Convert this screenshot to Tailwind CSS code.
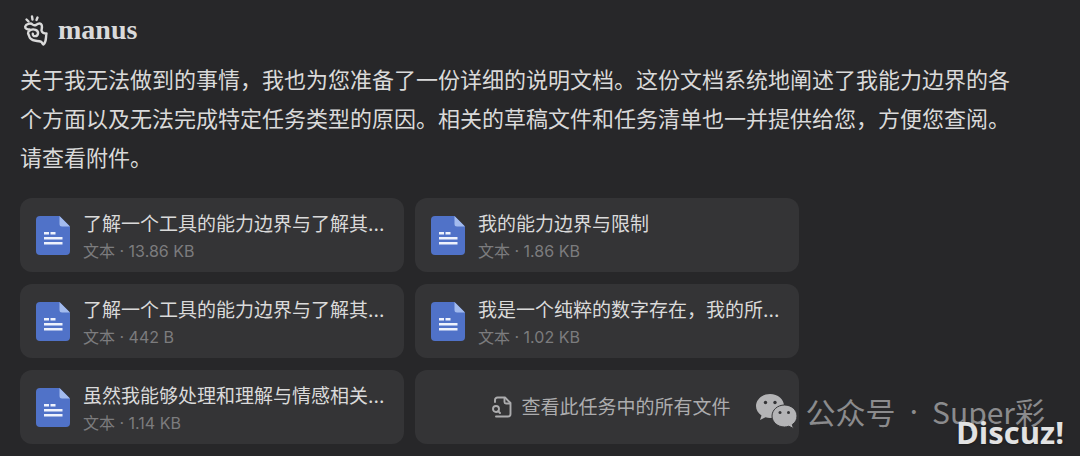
<!DOCTYPE html>
<html lang="zh-CN">
<head>
    <meta charset="UTF-8">
    <meta name="viewport" content="width=device-width, initial-scale=1.0">
    <title>manus</title>
    <script src="https://cdn.jsdelivr.net/npm/@tailwindcss/browser@4"></script>
</head>
<body class="relative min-h-screen bg-[#272729] text-[#dadada] font-['Inter','Noto_Sans_CJK_SC',sans-serif]">
    <!-- icons shared by the cards -->
    <svg class="hidden">
        <symbol id="doc" viewBox="0 0 34 39">
            <path fill="#5072c8" d="M4 0H23.500L34 10.500V35a4 4 0 0 1-4 4H4a4 4 0 0 1-4-4V4a4 4 0 0 1 4-4z"/>
            <path fill="#a3bbee" d="M23.500 0L34 10.500H26a2.500 2.500 0 0 1-2.500-2.500z"/>
            <path fill="#eef2fc" d="M8 16h5v2.500H8zM14.500 16h5v2.500h-5zM8 21h18.500v2.500H8zM8 26h18.500v2.500H8z"/>
        </symbol>
    </svg>

    <main class="pl-5 pr-14 pt-3">
        <header class="flex items-center gap-[10px] h-9">
            <svg class="w-7 h-9" viewBox="0 0 28 36" fill="none" stroke="#dadada" stroke-width="2.400" stroke-linecap="round" stroke-linejoin="round">
                <path d="M6.500 7.500L8.500 9.500M12 4.500L12.500 7.500M17.500 5.500L16.500 8"/>
                <path d="M9.500 17.500C7 17.500 5 16.500 5.200 14.500C6 12 10.500 10.500 12.500 12.500C13.500 13.500 14.500 13.500 16 13C18 11.500 19.500 11 21 12C23 14 21.500 17 21.500 18.500C22 20.500 24 21.500 26.500 21.500C25.500 25 27 29 23.500 32.500C22 32 22.500 30 20.500 29.500C17.500 28.500 13 29.500 10.500 26.500C9 25.500 9.500 24 8.500 22.500C7.500 21 8.500 18.500 10.500 18C13.500 16.500 18.500 18 18 21.500C17.500 25 12.500 25 12.800 21.800"/>
            </svg>
            <h1 class="text-[28px] leading-8 font-bold font-['Liberation_Serif',serif]">manus</h1>
        </header>

        <p class="mt-[13px] text-[22px] leading-[39px]">关于我无法做到的事情，我也为您准备了一份详细的说明文档。这份文档系统地阐述了我能力边界的各个方面以及无法完成特定任务类型的原因。相关的草稿文件和任务清单也一并提供给您，方便您查阅。请查看附件。</p>

        <section class="mt-5 grid grid-cols-2 gap-x-[11px] gap-y-3 max-w-[779px]">
            <a href="#" class="flex items-center gap-[13px] h-[74px] px-4 rounded-xl bg-[#343436]">
                <svg class="w-[34px] h-[39px] shrink-0"><use href="#doc"/></svg>
                <div class="min-w-0 pt-[3px] whitespace-nowrap">
                    <h2 class="text-[19px] leading-7">了解一个工具的能力边界与了解其...</h2>
                    <p class="text-base leading-6 text-[#7c7c7e]">文本 · 13.86 KB</p>
                </div>
            </a>
            <a href="#" class="flex items-center gap-[13px] h-[74px] px-4 rounded-xl bg-[#343436]">
                <svg class="w-[34px] h-[39px] shrink-0"><use href="#doc"/></svg>
                <div class="min-w-0 pt-[3px] whitespace-nowrap">
                    <h2 class="text-[19px] leading-7">我的能力边界与限制</h2>
                    <p class="text-base leading-6 text-[#7c7c7e]">文本 · 1.86 KB</p>
                </div>
            </a>
            <a href="#" class="flex items-center gap-[13px] h-[74px] px-4 rounded-xl bg-[#343436]">
                <svg class="w-[34px] h-[39px] shrink-0"><use href="#doc"/></svg>
                <div class="min-w-0 pt-[3px] whitespace-nowrap">
                    <h2 class="text-[19px] leading-7">了解一个工具的能力边界与了解其...</h2>
                    <p class="text-base leading-6 text-[#7c7c7e]">文本 · 442 B</p>
                </div>
            </a>
            <a href="#" class="flex items-center gap-[13px] h-[74px] px-4 rounded-xl bg-[#343436]">
                <svg class="w-[34px] h-[39px] shrink-0"><use href="#doc"/></svg>
                <div class="min-w-0 pt-[3px] whitespace-nowrap">
                    <h2 class="text-[19px] leading-7">我是一个纯粹的数字存在，我的所...</h2>
                    <p class="text-base leading-6 text-[#7c7c7e]">文本 · 1.02 KB</p>
                </div>
            </a>
            <a href="#" class="flex items-center gap-[13px] h-[74px] px-4 rounded-xl bg-[#343436]">
                <svg class="w-[34px] h-[39px] shrink-0"><use href="#doc"/></svg>
                <div class="min-w-0 pt-[3px] whitespace-nowrap">
                    <h2 class="text-[19px] leading-7">虽然我能够处理和理解与情感相关...</h2>
                    <p class="text-base leading-6 text-[#7c7c7e]">文本 · 1.14 KB</p>
                </div>
            </a>
            <button type="button" class="flex items-center justify-center gap-2 h-[74px] pl-6 pr-4 rounded-xl bg-[#343436] text-[19px] text-[#acacae]">
                <svg class="w-[22px] h-[22px]" viewBox="0 0 22 22" fill="none" stroke="currentColor" stroke-width="1.900" stroke-linecap="round" stroke-linejoin="round">
                    <path d="M4 6V4a2.500 2.500 0 0 1 2.500-2.500H14L19.500 7V18a2.500 2.500 0 0 1-2.500 2.500H5"/>
                    <path d="M13.500 2V6a1.500 1.500 0 0 0 1.500 1.500H19"/>
                    <circle cx="5" cy="13" r="3"/>
                    <path d="M7.200 15.200L9 17"/>
                </svg>
                <span class="pt-[2px]">查看此任务中的所有文件</span>
            </button>
        </section>
    </main>

    <!-- watermarks -->
    <div class="absolute right-[35px] bottom-[27px] flex items-center gap-2 text-[#8b8b8d]">
        <svg class="w-[42px] h-9" viewBox="0 0 42 36">
            <path fill="#b4b4b6" d="M15 1C7 1 1 6.500 1 13c0 4 2 7 5.500 9.500L5 27l5.500-2.800C12 24.700 13.500 25 15 25c8 0 14-5.400 14-12S23 1 15 1z"/>
            <path fill="#b4b4b6" stroke="#343436" d="M29.500 12C22.500 12 17 17 17 23s5.500 11 12.500 11c1.500 0 3-.3 4.300-.8L38.500 35.500l-1.200-4C40.500 29.500 42 26.500 42 23c0-6-5.500-11-12.500-11z"/>
            <g fill="#343436"><circle cx="10.500" cy="9.500" r="1.700"/><circle cx="20" cy="9.500" r="1.700"/><circle cx="25" cy="19.500" r="1.500"/><circle cx="33.500" cy="19.500" r="1.500"/></g>
        </svg>
        <p class="flex text-[30px] leading-9 font-['Noto_Sans_CJK_SC',sans-serif]">
            <span>公众号</span>
            <span class="px-[14px] font-['Inter',sans-serif]">·</span>
            <span>Super彩</span>
        </p>
    </div>
    <div class="absolute right-4 bottom-1 text-[31px] leading-10 font-bold text-[#e2e2e2] text-shadow-md font-['Open_Sans',sans-serif]">Discuz!</div>
</body>
</html>
